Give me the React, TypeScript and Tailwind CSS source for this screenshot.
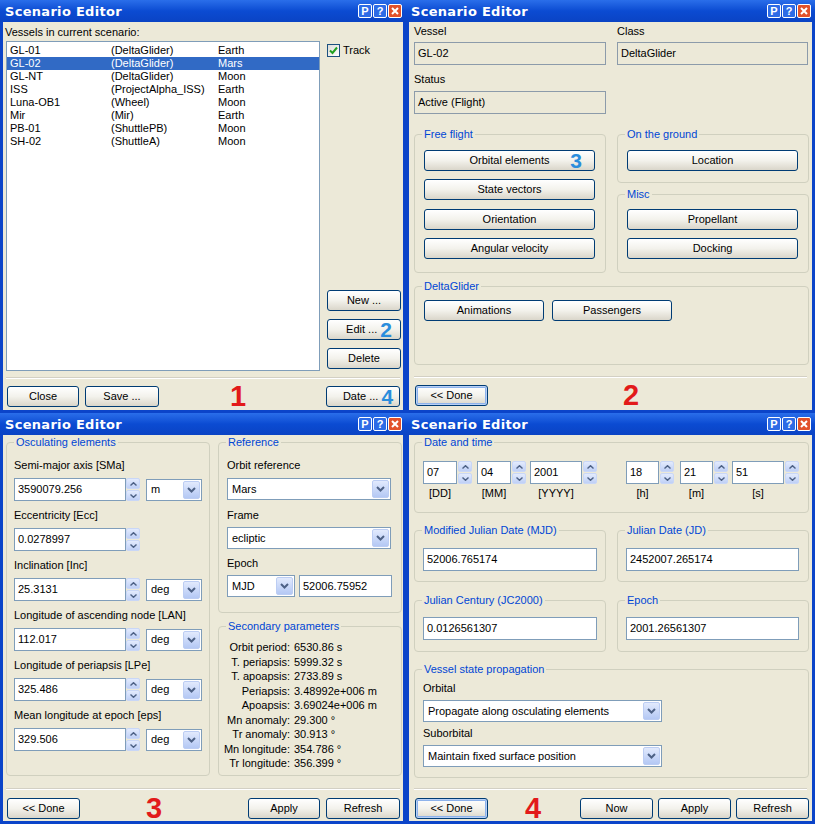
import React from "react";

const vessels = [
  ["GL-01", "(DeltaGlider)", "Earth"],
  ["GL-02", "(DeltaGlider)", "Mars"],
  ["GL-NT", "(DeltaGlider)", "Moon"],
  ["ISS", "(ProjectAlpha_ISS)", "Earth"],
  ["Luna-OB1", "(Wheel)", "Moon"],
  ["Mir", "(Mir)", "Earth"],
  ["PB-01", "(ShuttlePB)", "Moon"],
  ["SH-02", "(ShuttleA)", "Moon"],
];

const secondary = [
  ["Orbit period:", "6530.86 s"],
  ["T. periapsis:", "5999.32 s"],
  ["T. apoapsis:", "2733.89 s"],
  ["Periapsis:", "3.48992e+006 m"],
  ["Apoapsis:", "3.69024e+006 m"],
  ["Mn anomaly:", "29.300 °"],
  ["Tr anomaly:", "30.913 °"],
  ["Mn longitude:", "354.786 °"],
  ["Tr longitude:", "356.399 °"],
];

const TitleBar = () => (
  <div className="h-[22px] flex items-center pl-[5px] pr-[4px] bg-linear-to-b from-[#2A6EEA] via-[#0B4BD2] to-[#0A43C4]">
    <span className="text-white font-bold text-[13px] font-['DejaVu_Sans',sans-serif] tracking-[0.3px]">Scenario Editor</span>
    <div className="ml-auto flex gap-[1px]">
      <div className="w-[14px] h-[14px] rounded-[2px] border border-white bg-[#2D6BE6] text-white font-bold text-[11px] leading-[12px] text-center">P</div>
      <div className="w-[14px] h-[14px] rounded-[2px] border border-white bg-[#2D6BE6] text-white font-bold text-[11px] leading-[12px] text-center">?</div>
      <div className="w-[14px] h-[14px] rounded-[2px] border border-white bg-[#E2512A] flex items-center justify-center">
        <svg width="8" height="8" viewBox="0 0 8 8">
          <path d="M1 1L7 7M7 1L1 7" stroke="white" strokeWidth="2" />
        </svg>
      </div>
    </div>
  </div>
);

const Win = ({ children }: { children: React.ReactNode }) => (
  <div className="flex flex-col bg-[#0B44C9]">
    <TitleBar />
    <div className="flex-1 mx-[3px] mb-[3px] bg-[#ECE9D8] flex flex-col">{children}</div>
  </div>
);

const Btn = ({ children, className = "", focus }: { children: React.ReactNode; className?: string; focus?: boolean }) => (
  <div
    className={`h-[21px] flex items-center justify-center rounded-[3px] border border-[#003C74] bg-linear-to-b from-white via-[#F3F2EC] to-[#DAD6CA] ${focus ? "shadow-[inset_0_0_0_1px_#B8D0F6,inset_0_0_0_2px_#8DB2EB]" : ""} ${className}`}
  >
    {children}
  </div>
);

const ChevSmall = ({ up }: { up?: boolean }) => (
  <svg width="7" height="4" viewBox="0 0 7 4">
    <path d={up ? "M0.5 3.5L3.5 0.7L6.5 3.5" : "M0.5 0.5L3.5 3.3L6.5 0.5"} stroke="#4D6185" strokeWidth="1.4" fill="none" />
  </svg>
);

const Spin = () => (
  <div className="w-[14px] h-[23px] flex flex-col gap-[1px]">
    <div className="flex-1 flex items-center justify-center rounded-[2px] border border-[#C9D7F7] bg-linear-to-b from-[#E3EBFD] to-[#BFD0F6]">
      <ChevSmall up />
    </div>
    <div className="flex-1 flex items-center justify-center rounded-[2px] border border-[#C9D7F7] bg-linear-to-b from-[#E3EBFD] to-[#BFD0F6]">
      <ChevSmall />
    </div>
  </div>
);

const Edit = ({ value, className = "" }: { value: string; className?: string }) => (
  <div className={`h-[23px] border border-[#7F9DB9] bg-white flex items-center pl-[3px] ${className}`}>{value}</div>
);

const Combo = ({ value, className = "" }: { value: string; className?: string }) => (
  <div className={`h-[22px] border border-[#7F9DB9] bg-white flex items-center pl-[4px] pr-[1px] ${className}`}>
    <span>{value}</span>
    <div className="ml-auto w-[17px] h-[18px] rounded-[2px] border border-[#BCCDF3] bg-linear-to-b from-[#E2EAFD] to-[#B4C8F4] flex items-center justify-center">
      <svg width="9" height="6" viewBox="0 0 9 6">
        <path d="M1 1l3.5 3.5L8 1" stroke="#4D6185" strokeWidth="2" fill="none" />
      </svg>
    </div>
  </div>
);

const ReadOnly = ({ value, className = "" }: { value: string; className?: string }) => (
  <div className={`h-[23px] border border-[#8C9BAA] bg-[#ECE9D8] flex items-center pl-[3px] ${className}`}>{value}</div>
);

const Group = ({ title, className = "", children }: { title: string; className?: string; children?: React.ReactNode }) => (
  <fieldset className={`border border-[#D0D0BF] rounded-[4px] ${className}`}>
    <legend className="ml-[7px] px-[2px] leading-[13px] text-[#0046D5]">{title}</legend>
    {children}
  </fieldset>
);

const Sep = ({ className = "" }: { className?: string }) => (
  <div className={`h-[2px] border-t border-[#D3D0C4] border-b border-b-white ${className}`} />
);

const Red = ({ n, className = "" }: { n: string; className?: string }) => (
  <span className={`text-[29px] leading-[22px] font-bold text-[#E21A1A] ${className}`}>{n}</span>
);

const Blue = ({ n, className = "" }: { n: string; className?: string }) => (
  <span className={`text-[21px] leading-[16px] font-bold text-[#2A8DDC] ${className}`}>{n}</span>
);

const Win1 = () => (
  <Win>
    <div className="pl-[2px] pt-[4px]">Vessels in current scenario:</div>
    <div className="flex mt-[2px]">
      <div className="ml-[3px] w-[314px] h-[330px] border border-[#7F9DB9] bg-white pt-[2px]">
        {vessels.map((v, i) => (
          <div
            key={v[0]}
            className={`h-[13px] grid grid-cols-[101px_107px_1fr] pl-[3px] ${i === 1 ? "bg-[#316AC5] text-white" : ""}`}
          >
            <span>{v[0]}</span>
            <span>{v[1]}</span>
            <span>{v[2]}</span>
          </div>
        ))}
      </div>
      <div className="ml-[7px] w-[74px] flex flex-col pb-[2px]">
        <div className="flex items-center mt-[3px]">
          <div className="w-[13px] h-[13px] border border-[#1C5180] bg-linear-to-br from-[#DCDCD7] to-white flex items-center justify-center">
            <svg width="9" height="9" viewBox="0 0 9 9">
              <path d="M1 4.5L3.5 7L8 1.5" stroke="#21A121" strokeWidth="2" fill="none" />
            </svg>
          </div>
          <span className="ml-[3px]">Track</span>
        </div>
        <div className="mt-auto flex flex-col gap-[8px]">
          <Btn>New ...</Btn>
          <Btn>
            <span className="ml-[10px]">Edit ...</span>
            <Blue n="2" className="ml-[3px]" />
          </Btn>
          <Btn>Delete</Btn>
        </div>
      </div>
    </div>
    <Sep className="mt-[6px] mx-[3px]" />
    <div className="flex items-end mt-[6px]">
      <Btn className="ml-[4px] w-[72px]">Close</Btn>
      <Btn className="ml-[6px] w-[74px]">Save ...</Btn>
      <Red n="1" className="ml-[71px]" />
      <Btn className="ml-auto mr-[3px] w-[74px]">
        <span className="ml-[10px]">Date ...</span>
        <Blue n="4" className="ml-[3px]" />
      </Btn>
    </div>
  </Win>
);

const Win2 = () => (
  <Win>
    <div className="flex pl-[5px] pt-[3px]">
      <div className="w-[192px]">
        <div>Vessel</div>
        <ReadOnly value="GL-02" className="mt-[4px]" />
        <div className="mt-[8px]">Status</div>
        <ReadOnly value="Active (Flight)" className="mt-[5px]" />
      </div>
      <div className="ml-[11px] w-[191px]">
        <div>Class</div>
        <ReadOnly value="DeltaGlider" className="mt-[4px]" />
      </div>
    </div>
    <div className="flex pl-[5px] mt-[14px]">
      <Group title="Free flight" className="w-[192px] h-[145px]">
        <div className="pl-[9px] flex flex-col">
          <Btn className="mt-[9px] w-[171px] relative">
            Orbital elements
            <Blue n="3" className="absolute right-[12px] top-[2px]" />
          </Btn>
          <Btn className="mt-[8px] w-[171px]">State vectors</Btn>
          <Btn className="mt-[9px] w-[171px]">Orientation</Btn>
          <Btn className="mt-[8px] w-[171px]">Angular velocity</Btn>
        </div>
      </Group>
      <div className="ml-[11px] flex flex-col">
        <Group title="On the ground" className="w-[192px] h-[55px]">
          <div className="pl-[9px]">
            <Btn className="mt-[9px] w-[171px]">Location</Btn>
          </div>
        </Group>
        <Group title="Misc" className="w-[192px] h-[85px] mt-[5px]">
          <div className="pl-[9px] flex flex-col">
            <Btn className="mt-[8px] w-[171px]">Propellant</Btn>
            <Btn className="mt-[8px] w-[171px]">Docking</Btn>
          </div>
        </Group>
      </div>
    </div>
    <Group title="DeltaGlider" className="ml-[5px] mt-[7px] w-[395px] h-[85px]">
      <div className="pl-[9px] flex gap-[8px]">
        <Btn className="mt-[7px] w-[120px]">Animations</Btn>
        <Btn className="mt-[7px] w-[120px]">Passengers</Btn>
      </div>
    </Group>
    <Sep className="mt-[11px] mx-[5px]" />
    <div className="flex items-end mt-[6px]">
      <Btn className="ml-[6px] w-[73px]" focus>
        &lt;&lt; Done
      </Btn>
      <Red n="2" className="ml-[135px]" />
    </div>
  </Win>
);

const Field = ({ label, value, unit, first }: { label: string; value: string; unit?: string; first?: boolean }) => (
  <>
    <div className={first ? "mt-[10px]" : "mt-[8px]"}>{label}</div>
    <div className="flex items-center mt-[6px]">
      <Edit value={value} className="w-[112px]" />
      <Spin />
      {unit && <Combo value={unit} className="ml-[6px] w-[56px]" />}
    </div>
  </>
);

const Win3 = () => (
  <Win>
    <div className="flex pt-[1px] pl-[3px]">
      <Group title="Osculating elements" className="w-[204px] h-[340px]">
        <div className="pl-[7px] flex flex-col">
          <Field first label="Semi-major axis [SMa]" value="3590079.256" unit="m" />
          <Field label="Eccentricity [Ecc]" value="0.0278997" />
          <Field label="Inclination [Inc]" value="25.3131" unit="deg" />
          <Field label="Longitude of ascending node [LAN]" value="112.017" unit="deg" />
          <Field label="Longitude of periapsis [LPe]" value="325.486" unit="deg" />
          <Field label="Mean longitude at epoch [eps]" value="329.506" unit="deg" />
        </div>
      </Group>
      <div className="ml-[8px] flex flex-col">
        <Group title="Reference" className="w-[184px] h-[177px]">
          <div className="pl-[8px] flex flex-col">
            <div className="mt-[10px]">Orbit reference</div>
            <Combo value="Mars" className="mt-[6px] w-[164px]" />
            <div className="mt-[9px]">Frame</div>
            <Combo value="ecliptic" className="mt-[5px] w-[164px]" />
            <div className="mt-[8px]">Epoch</div>
            <div className="flex mt-[5px]">
              <Combo value="MJD" className="w-[68px]" />
              <div className="ml-[4px] w-[93px] h-[22px] border border-[#7F9DB9] bg-white flex items-center pl-[3px]">52006.75952</div>
            </div>
          </div>
        </Group>
        <Group title="Secondary parameters" className="mt-[7px] w-[184px] h-[156px]">
          <div className="pt-[7px] grid grid-cols-[71px_1fr] gap-x-[4px] leading-[14.5px]">
            {secondary.map((r) => (
              <React.Fragment key={r[0]}>
                <span className="text-right">{r[0]}</span>
                <span>{r[1]}</span>
              </React.Fragment>
            ))}
          </div>
        </Group>
      </div>
    </div>
    <Sep className="mt-[12px] mx-[3px]" />
    <div className="flex items-end mt-[7px]">
      <Btn className="ml-[4px] w-[73px]">&lt;&lt; Done</Btn>
      <Red n="3" className="ml-[66px]" />
      <Btn className="ml-auto w-[72px]">Apply</Btn>
      <Btn className="ml-[6px] mr-[3px] w-[74px]">Refresh</Btn>
    </div>
  </Win>
);

const DateField = ({ value, label, w }: { value: string; label: string; w: string }) => (
  <div className="flex flex-col">
    <div className="flex">
      <Edit value={value} className={w} />
      <div className="ml-[1px]">
        <Spin />
      </div>
    </div>
    <div className={`mt-[3px] text-center ${w}`}>{label}</div>
  </div>
);

const Win4 = () => (
  <Win>
    <Group title="Date and time" className="ml-[5px] mt-[1px] w-[395px] h-[77px]">
      <div className="pl-[8px] mt-[12px] flex">
        <DateField value="07" label="[DD]" w="w-[34px]" />
        <div className="ml-[5px]">
          <DateField value="04" label="[MM]" w="w-[34px]" />
        </div>
        <div className="ml-[4px]">
          <DateField value="2001" label="[YYYY]" w="w-[52px]" />
        </div>
        <div className="ml-[29px]">
          <DateField value="18" label="[h]" w="w-[33px]" />
        </div>
        <div className="ml-[6px]">
          <DateField value="21" label="[m]" w="w-[33px]" />
        </div>
        <div className="ml-[4px]">
          <DateField value="51" label="[s]" w="w-[52px]" />
        </div>
      </div>
    </Group>
    <div className="flex ml-[5px] mt-[11px]">
      <Group title="Modified Julian Date (MJD)" className="w-[192px] h-[58px]">
        <Edit value="52006.765174" className="ml-[8px] mt-[11px] w-[174px]" />
      </Group>
      <Group title="Julian Date (JD)" className="ml-[11px] w-[192px] h-[58px]">
        <Edit value="2452007.265174" className="ml-[8px] mt-[11px] w-[173px]" />
      </Group>
    </div>
    <div className="flex ml-[5px] mt-[12px]">
      <Group title="Julian Century (JC2000)" className="w-[192px] h-[58px]">
        <Edit value="0.0126561307" className="ml-[8px] mt-[10px] w-[174px]" />
      </Group>
      <Group title="Epoch" className="ml-[11px] w-[192px] h-[58px]">
        <Edit value="2001.26561307" className="ml-[8px] mt-[10px] w-[173px]" />
      </Group>
    </div>
    <Group title="Vessel state propagation" className="ml-[5px] mt-[11px] w-[395px] h-[115px]">
      <div className="pl-[8px] flex flex-col">
        <div className="mt-[6px]">Orbital</div>
        <Combo value="Propagate along osculating elements" className="mt-[5px] w-[239px] h-[21px]" />
        <div className="mt-[5px]">Suborbital</div>
        <Combo value="Maintain fixed surface position" className="mt-[5px] w-[239px] h-[21px]" />
      </div>
    </Group>
    <Sep className="mt-[10px] mx-[5px]" />
    <div className="flex items-end mt-[7px]">
      <Btn className="ml-[6px] w-[73px]" focus>
        &lt;&lt; Done
      </Btn>
      <Red n="4" className="ml-[37px]" />
      <Btn className="ml-auto w-[73px]">Now</Btn>
      <Btn className="ml-[5px] w-[73px]">Apply</Btn>
      <Btn className="ml-[5px] mr-[3px] w-[73px]">Refresh</Btn>
    </div>
  </Win>
);

export default function App() {
  return (
    <div className="w-[815px] h-[824px] grid grid-cols-[406px_409px] grid-rows-[413px_411px] bg-[#0B3CC0] font-['Liberation_Sans',Arial,sans-serif] text-[11px] leading-[13px] text-black">
      <Win1 />
      <Win2 />
      <Win3 />
      <Win4 />
    </div>
  );
}
